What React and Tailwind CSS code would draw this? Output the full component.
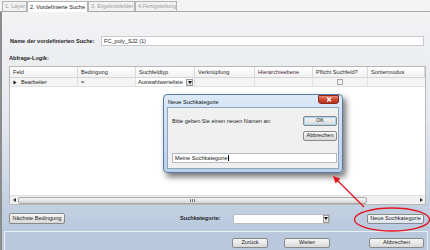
import React from "react";

const cols = [
  { t: "Feld", w: "w-[68px]" },
  { t: "Bedingung", w: "w-[58px]" },
  { t: "Suchfeldtyp", w: "w-[59px]" },
  { t: "Verknüpfung", w: "w-[60px]" },
  { t: "Hierarchieebene", w: "w-[58px]", c: "text-[#4e2a48]" },
  { t: "Pflicht Suchfeld?", w: "w-[55px]" },
  { t: "Sortiermodus", w: "flex-1" },
];

function Btn({ className = "", children }) {
  return (
    <div
      className={`flex items-center justify-center whitespace-nowrap rounded-[2px] border border-[#8a8a8a] bg-linear-to-b from-[#f6f6f6] to-[#d9d9d9] text-[#1e1e1e] leading-none ${className}`}
    >
      {children}
    </div>
  );
}

function Tab({ active, children, className = "" }) {
  return (
    <div
      className={`flex items-center whitespace-nowrap overflow-hidden pl-[2px] border border-[#b4b4b4] ${
        active
          ? "h-[11px] bg-white border-b-0 text-[#1a1a1a] -mb-px"
          : "h-[10px] bg-[#f1f1f1] text-[#a0a0a0] border-b-0"
      } ${className}`}
    >
      {children}
    </div>
  );
}

function DropArrow({ className = "" }) {
  return (
    <div
      className={`flex items-center justify-center border border-[#9a9a9a] bg-linear-to-b from-[#f4f4f4] to-[#d8d8d8] ${className}`}
    >
      <svg width="4" height="3" viewBox="0 0 4 3">
        <path d="M0 0h4L2 3z" fill="#111" />
      </svg>
    </div>
  );
}

export default function App() {
  return (
    <div className="relative w-[430px] h-[250px] overflow-hidden flex flex-col bg-[#f4f4f4] text-[5.6px] font-['Liberation_Sans',Arial,sans-serif] text-[#1e1e1e]">
      {/* tabs */}
      <div className="h-[12px] flex-none flex items-end pl-[2px] border-b border-[#a8a8a8] bg-[#f4f4f4]">
        <Tab className="w-[25px]">1. Layer</Tab>
        <Tab active className="w-[61px]">2. Vordefinierte Suche</Tab>
        <Tab className="w-[47px]">3. Ergebnisfelder</Tab>
        <Tab className="w-[42px]">4.Fertigstellung</Tab>
      </div>

      <div className="flex-1 flex flex-col border-l-2 border-[#8c8c8c]">
        {/* main panel */}
        <div className="h-[219px] flex flex-col pl-[7px] pr-[4px] bg-linear-to-b from-[#f3f3f4] via-[#e4e8ef] to-[#b9c9de]">
          <div className="mt-[24px] h-[10px] flex items-center">
            <div className="w-[92px] pl-[1px] font-bold whitespace-nowrap">Name der vordefinierten Suche:</div>
            <div className="flex-1 mr-[2px] h-[10px] flex items-center pl-[2px] bg-white border border-[#c6c9ce]">
              FC_poly_SJ2 (1)
            </div>
          </div>

          <div className="mt-[9px] h-[7px] leading-[7px] font-bold">Abfrage-Logik:</div>

          {/* grid */}
          <div className="mt-[4px] h-[139px] flex flex-col bg-white border border-[#b8b8b8]">
            <div className="h-[11px] flex border-b border-[#d6d6d6] bg-linear-to-b from-white to-[#f1f1f1]">
              {cols.map((c) => (
                <div
                  key={c.t}
                  className={`${c.w} flex items-center whitespace-nowrap pl-[3px] border-r border-[#dadada] ${c.c || "text-[#2a2a2a]"}`}
                >
                  {c.t}
                </div>
              ))}
            </div>
            <div className="h-[9px] flex border-b border-[#e2e2e2] bg-[#f4f4f4]">
              <div className="w-[68px] flex items-center border-r border-[#dedede]">
                <svg width="9" height="9" viewBox="0 0 9 9" className="flex-none">
                  <path d="M3.5 2.5l3 2-3 2z" fill="#111" />
                </svg>
                <span className="ml-[2px]">Bearbeiter</span>
              </div>
              <div className="w-[58px] flex items-center pl-[3px] border-r border-[#dedede]">=</div>
              <div className="w-[59px] flex items-center pl-[2px] border-r border-[#dedede] bg-white">
                <span className="flex-1 whitespace-nowrap">Auswahlwerteliste</span>
                <DropArrow className="w-[7px] h-[7px] mr-px" />
              </div>
              <div className="w-[60px] border-r border-[#dedede]" />
              <div className="w-[58px] border-r border-[#dedede]" />
              <div className="w-[55px] flex items-center justify-center border-r border-[#dedede]">
                <div className="w-[6px] h-[6px] border border-[#a9a9a9] bg-linear-to-br from-[#e2e2e2] to-white" />
              </div>
              <div className="flex-1" />
            </div>
            <div className="flex-1" />
            {/* horizontal scrollbar */}
            <div className="h-[9px] flex items-center bg-[#f0f0f0] border-t border-[#e0e0e0]">
              <div className="w-[8px] h-full flex items-center justify-center">
                <svg width="3" height="4" viewBox="0 0 3 4">
                  <path d="M3 0v4L0 2z" fill="#333" />
                </svg>
              </div>
              <div className="w-[349px] h-[7px] rounded-[2px] border border-[#a9a9a9] bg-linear-to-b from-[#f7f7f7] to-[#d4d4d4] flex items-center justify-center gap-px">
                <div className="w-px h-[3px] bg-[#7a7a7a]" />
                <div className="w-px h-[3px] bg-[#7a7a7a]" />
                <div className="w-px h-[3px] bg-[#7a7a7a]" />
              </div>
              <div className="flex-1" />
              <div className="w-[7px] h-full flex items-center justify-center">
                <svg width="3" height="4" viewBox="0 0 3 4">
                  <path d="M0 0v4l3-2z" fill="#333" />
                </svg>
              </div>
            </div>
          </div>

          {/* action row */}
          <div className="mt-[8px] h-[11px] flex items-center">
            <Btn className="w-[56px] h-[11px]">Nächste Bedingung</Btn>
            <div className="ml-[115px] w-[53px] font-bold whitespace-nowrap">Suchkategorie:</div>
            <div className="w-[97px] h-[10px] flex items-center justify-end bg-white border border-[#b9bcc2]">
              <DropArrow className="w-[6px] h-[8px]" />
            </div>
            <Btn className="ml-auto mr-[2px] w-[57px] h-[10px] border-[#3c7fb1] from-[#eef4fa] to-[#d9e4ef]">
              Neue Suchkategorie
            </Btn>
          </div>
        </div>

        {/* bottom bar */}
        <div className="flex-1 bg-[#b9c8dd] pl-[2px] pr-[2px]">
          <div className="h-full border-t border-l border-r border-[#e9eff7] pt-[6px] flex">
            <Btn className="ml-[227px] w-[36px] h-[10px]">Zurück</Btn>
            <Btn className="ml-[16px] w-[46px] h-[10px]">Weiter</Btn>
            <Btn className="ml-[39px] w-[55px] h-[10px]">Abbrechen</Btn>
          </div>
        </div>
      </div>

      {/* dialog */}
      <div className="absolute left-[163px] top-[94px] w-[180px] h-[79px] rounded-[4px] border border-[#5b7aa0] bg-linear-to-b from-[#dce9f8] to-[#bad0ea] shadow-[3px_4px_6px_rgba(0,0,0,0.55)] flex flex-col px-[3px] pb-[3px]">
        <div className="h-[12px] flex-none flex items-start justify-between">
          <span className="mt-[3px] pl-px text-[#111]">Neue Suchkategorie</span>
          <div className="w-[21px] h-[9px] rounded-b-[3px] border border-[#8a2b1e] bg-linear-to-b from-[#e88a78] via-[#cf4a32] to-[#b8301c] flex items-center justify-center">
            <svg width="6" height="5" viewBox="0 0 6 5">
              <path d="M1 0.5l4 4M5 0.5l-4 4" stroke="white" strokeWidth="1.3" />
            </svg>
          </div>
        </div>
        <div className="flex-1 bg-[#f0f0f0] border border-[#8fa5c0] flex flex-col pl-[4px] pr-px">
          <div className="mt-[8px] flex items-start justify-between">
            <span className="mt-px">Bitte geben Sie einen neuen Namen an:</span>
            <div className="flex flex-col gap-[5px]">
              <Btn className="w-[34px] h-[10px] border-[#3c7fb1] shadow-[inset_0_0_0_1px_#a6d8f5]">OK</Btn>
              <Btn className="w-[34px] h-[10px]">Abbrechen</Btn>
            </div>
          </div>
          <div className="mt-[12px] h-[10px] flex items-center pl-[2px] bg-white border border-[#b4bac2]">
            Meine Suchkategorie
            <span className="w-px h-[6px] bg-black" />
          </div>
        </div>
      </div>

      {/* red annotation */}
      <svg className="absolute left-0 top-0 pointer-events-none" width="430" height="250" viewBox="0 0 430 250">
        <line x1="364" y1="207" x2="337" y2="180" stroke="#e3141c" strokeWidth="1.2" />
        <polygon points="333,176 335.6,183.4 340.4,178.6" fill="#e3141c" />
        <ellipse cx="392" cy="219.5" rx="37.5" ry="11.5" fill="none" stroke="#e3141c" strokeWidth="1.3" />
      </svg>
    </div>
  );
}
